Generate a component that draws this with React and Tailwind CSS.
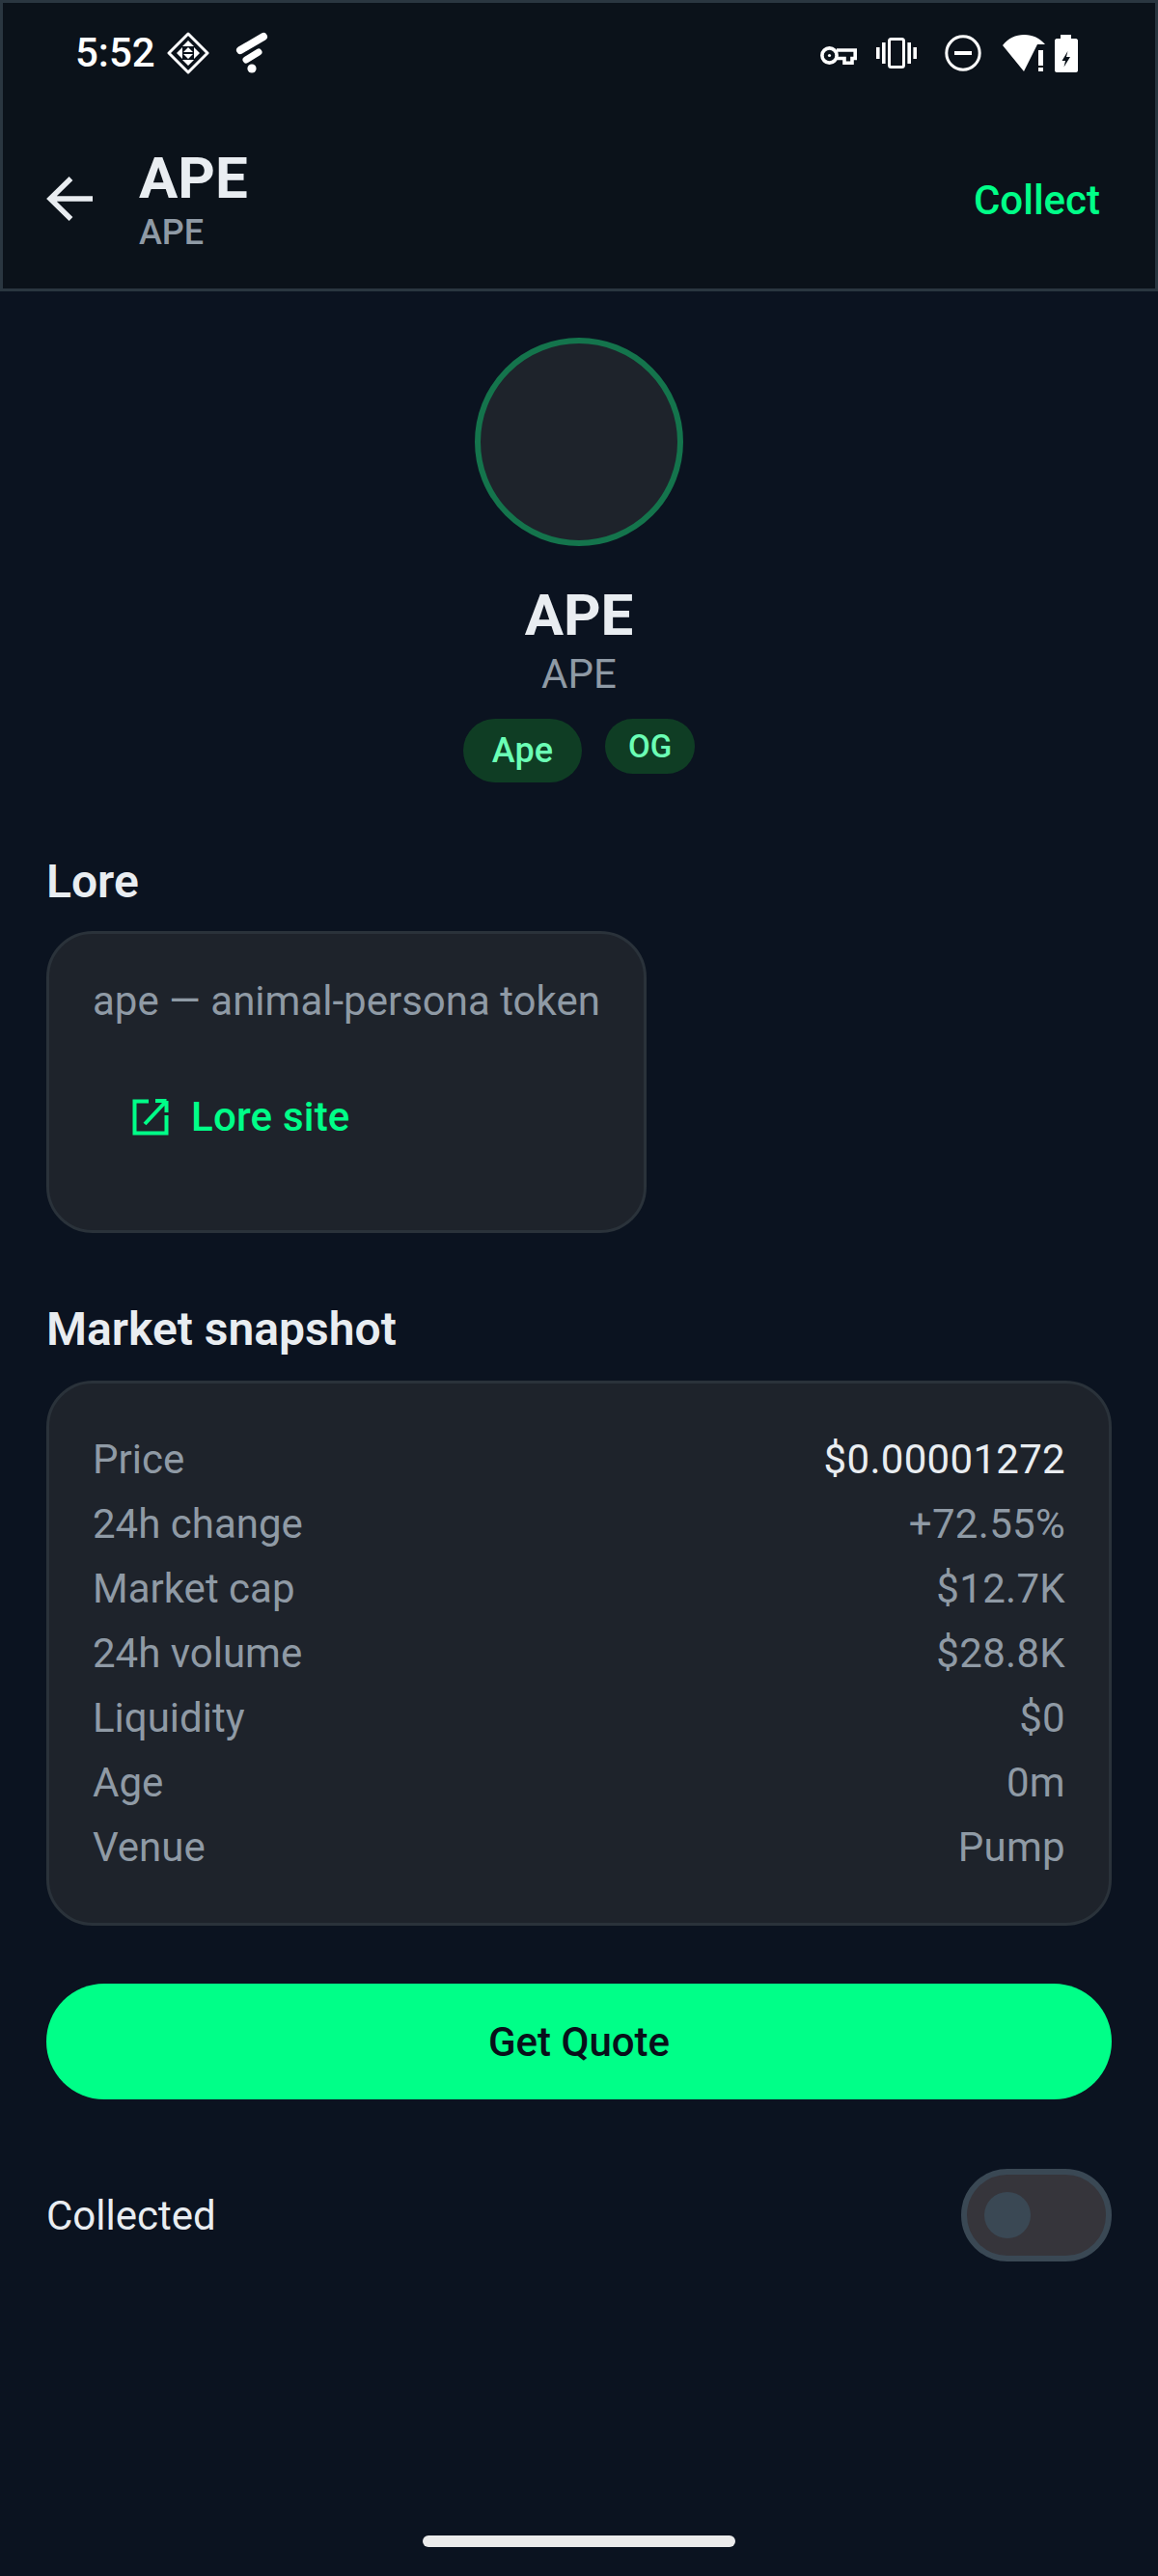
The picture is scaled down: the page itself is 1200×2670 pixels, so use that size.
const Row = ({ label, value, bright }) => (
  <div className="flex justify-between items-center h-[67px]">
    <span>{label}</span>
    <span className={bright ? "text-[#e9edf1] tracking-[0.3px]" : "tracking-[0.3px]"}>{value}</span>
  </div>
);

const StatusLeft = () => (
  <div className="flex items-center pl-[75px]">
    <span className="text-[42px] leading-[50px] font-medium text-white w-[95px]">5:52</span>
    <svg width="44" height="44" viewBox="0 0 44 44" fill="none" stroke="#fff" strokeWidth="3">
      <path d="M22 2 42 22 22 42 2 22Z" strokeLinejoin="round" />
      <path d="M22 9 28 15H16ZM22 35 28 29H16ZM10 22 16 16V28ZM34 22 28 16V28ZM22 16 27 21H17ZM17 23H27L22 28Z" fill="#fff" stroke="none" />
    </svg>
    <svg className="ml-[27px]" width="34" height="44" viewBox="0 0 34 44" fill="#fff">
      <path d="M5 19 29 5" stroke="#fff" strokeWidth="8" strokeLinecap="round" />
      <path d="M11 29 24 21" stroke="#fff" strokeWidth="7" strokeLinecap="round" />
      <circle cx="17" cy="38" r="4.6" />
    </svg>
  </div>
);

const StatusRight = () => (
  <div className="flex items-center pr-[80px]">
    <svg className="mt-[5px]" width="38" height="19" viewBox="0 0 38 19" fill="none" stroke="#fff" strokeWidth="3.6">
      <circle cx="9.5" cy="9.5" r="7.6" />
      <circle cx="9.5" cy="9.5" r="1.6" fill="#fff" stroke="none" />
      <path d="M17 4H36.2V12.5H33V17.2H25V12.5H17" />
    </svg>
    <svg className="ml-[20px]" width="42" height="32" viewBox="0 0 42 32" fill="none" stroke="#fff">
      <rect x="13.5" y="1.5" width="15" height="29" rx="2" strokeWidth="3" />
      <path d="M7.8 5V27M1.8 10V22M34.2 5V27M40.2 10V22" strokeWidth="3.6" />
    </svg>
    <svg className="ml-[29px]" width="38" height="38" viewBox="0 0 38 38" fill="none" stroke="#fff">
      <circle cx="19" cy="19" r="17.2" strokeWidth="3" />
      <path d="M10 19H28" strokeWidth="4" />
    </svg>
    <svg className="ml-[22px]" width="45" height="38" viewBox="0 0 45 38" fill="#fff">
      <path d="M0 11C11 -3.5 33 -3.5 44 10H36L22 38Z" />
      <path d="M37 16H42V32H37ZM37 34H42V38H37Z" />
    </svg>
    <svg className="ml-[9px]" width="24" height="39" viewBox="0 0 24 39">
      <path d="M6 0H17V4H22C23 4 24 5 24 6V37C24 38 23 39 22 39H2C1 39 0 38 0 37V6C0 5 1 4 2 4H6Z" fill="#fff" />
      <path d="M13.5 17 7.5 27H11L9.5 33.5 16 23H12Z" fill="#0b121a" />
    </svg>
  </div>
);

const App = () => {
  const market = [
    ["Price", "$0.00001272", true],
    ["24h change", "+72.55%"],
    ["Market cap", "$12.7K"],
    ["24h volume", "$28.8K"],
    ["Liquidity", "$0"],
    ["Age", "0m"],
    ["Venue", "Pump"],
  ];

  return (
    <div className="w-[1200px] h-[2670px] bg-[#0b1320] flex flex-col font-[Roboto,sans-serif] overflow-hidden">
      <header className="h-[302px] border-[3px] border-[#2a3640] bg-[#0b121a] flex flex-col shrink-0">
        <div className="h-[108px] pb-[4px] flex justify-between items-center shrink-0">
          <StatusLeft />
          <StatusRight />
        </div>
        <div className="flex-1 flex items-center justify-between pt-[2px] pl-[45px] pr-[57px]">
          <div className="flex items-center">
            <svg width="48" height="48" viewBox="0 0 48 48" fill="none" stroke="#e9edf1" strokeWidth="5.4">
              <path d="M48 24H4M25.5 3 4 24 25.5 45" />
            </svg>
            <div className="ml-[48px] flex flex-col">
              <span className="text-[60px] leading-[70px] font-bold text-[#e9edf1]">APE</span>
              <span className="text-[36px] leading-[42px] font-medium text-[#8f9aa5]">APE</span>
            </div>
          </div>
          <span className="text-[42px] leading-[50px] font-medium text-[#00ff88] mt-[3px]">Collect</span>
        </div>
      </header>

      <main className="flex-1 flex flex-col px-[48px] relative">
        <div className="flex flex-col items-center pt-[48px]">
          <div className="w-[216px] h-[216px] rounded-full bg-[#1e232b] border-[6px] border-[#14744c]" />
          <span className="mt-[37px] text-[60px] leading-[70px] font-bold text-[#e9edf1]">APE</span>
          <span className="mt-[2px] text-[42px] leading-[47px] text-[#8f9aa5]">APE</span>
          <div className="mt-[23px] flex items-start gap-[24px]">
            <span className="h-[66px] px-[30px] rounded-full bg-[#0f3d24] text-[#6bffb5] text-[36px] font-medium flex items-center">Ape</span>
            <span className="h-[57px] px-[24px] rounded-full bg-[#0f3d24] text-[#6bffb5] text-[33px] font-medium flex items-center">OG</span>
          </div>
        </div>

        <h2 className="mt-[76px] text-[48px] leading-[54px] font-semibold text-[#e9edf1]">Lore</h2>
        <div className="mt-[24px] w-[622px] h-[313px] rounded-[48px] bg-[#1e232b] border-[3px] border-[#2a323a] pl-[45px] pt-[45px] flex flex-col">
          <p className="text-[42px] leading-[50px] text-[#8f9aa5] whitespace-nowrap">ape — animal-persona token</p>
          <div className="mt-[70px] ml-[41px] flex items-center gap-[23px] text-[#00ff88] text-[42px] font-medium tracking-[0.2px]">
            <svg width="38" height="38" viewBox="0 0 38 38" fill="none" stroke="#00ff88" strokeWidth="4">
              <path d="M17 2.5H2.5V35.5H35.5V17M35.5 2H24M35.5 2V14M35.5 2 13 26" />
            </svg>
            <span className="leading-[50px]">Lore site</span>
          </div>
        </div>

        <h2 className="mt-[73px] text-[48px] leading-[54px] font-semibold text-[#e9edf1]">Market snapshot</h2>
        <div className="mt-[26px] h-[565px] rounded-[48px] bg-[#1e232b] border-[3px] border-[#2a323a] px-[45px] py-[45px] text-[42px] text-[#8f9aa5]">
          {market.map(([label, value, bright]) => (
            <Row key={label} label={label} value={value} bright={bright} />
          ))}
        </div>

        <button className="mt-[60px] h-[120px] rounded-full bg-[#00ff88] text-[#08101a] text-[42px] font-medium shrink-0">Get Quote</button>

        <div className="mt-[72px] flex items-center justify-between">
          <span className="text-[42px] text-[#e9edf1]">Collected</span>
          <div className="w-[156px] h-[96px] rounded-full bg-[#36353b] border-[6px] border-[#3a4854] flex items-center pl-[18px]">
            <div className="w-[48px] h-[48px] rounded-full bg-[#3a4854]" />
          </div>
        </div>

        <div className="absolute bottom-[30px] left-[438px] w-[324px] h-[12px] rounded-[6px] bg-[#ebebeb]" />
      </main>
    </div>
  );
};

export default App;
